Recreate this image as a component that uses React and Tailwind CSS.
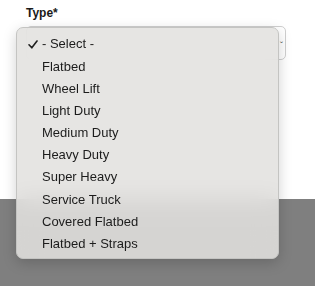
import React from 'react'

const options = [
  '- Select -',
  'Flatbed',
  'Wheel Lift',
  'Light Duty',
  'Medium Duty',
  'Heavy Duty',
  'Super Heavy',
  'Service Truck',
  'Covered Flatbed',
  'Flatbed + Straps',
]

const Check = () => (
  <svg width="10" height="9" viewBox="0 0 10 9" className="ml-[11px]">
    <path d="M1 4.8 L3.8 7.8 L9 1" fill="none" stroke="#1f1f1f" strokeWidth="1.6" strokeLinecap="round" strokeLinejoin="round" />
  </svg>
)

const App = () => {
  const selected = 0

  return (
    <div className="relative w-[315px] h-[286px] flex flex-col overflow-hidden bg-[#7f7f7f]" style={{ fontFamily: '"Liberation Sans", Arial, sans-serif' }}>
      <div className="h-[199px] bg-white px-[26px] pt-[6px]">
        <label className="block text-[12px] font-bold text-[#1a1a1a] leading-[14px]">Type*</label>
        <div className="relative mt-[6px] h-[34px] w-[260px] rounded-[5px] border border-[#cfcfcf] bg-white">
          <span className="absolute right-[2px] top-[12px] text-[9px] text-[#555]">ˇ</span>
        </div>
      </div>
      <div className="flex-1" />

      <ul className="absolute left-[16px] top-[27px] w-[263px] h-[232px] py-[5px] rounded-[7px] border border-[#c4c4c2] bg-[rgba(226,225,223,0.87)] backdrop-blur-md shadow-[0_4px_14px_rgba(0,0,0,0.18)]">
        {options.map((opt, i) => (
          <li key={opt} className="flex items-center h-[22.2px] text-[13px] text-[#1c1c1c]">
            <span className="w-[25px] flex items-center">
              {i === selected && <Check />}
            </span>
            <span>{opt}</span>
          </li>
        ))}
      </ul>
    </div>
  )
}

export default App
